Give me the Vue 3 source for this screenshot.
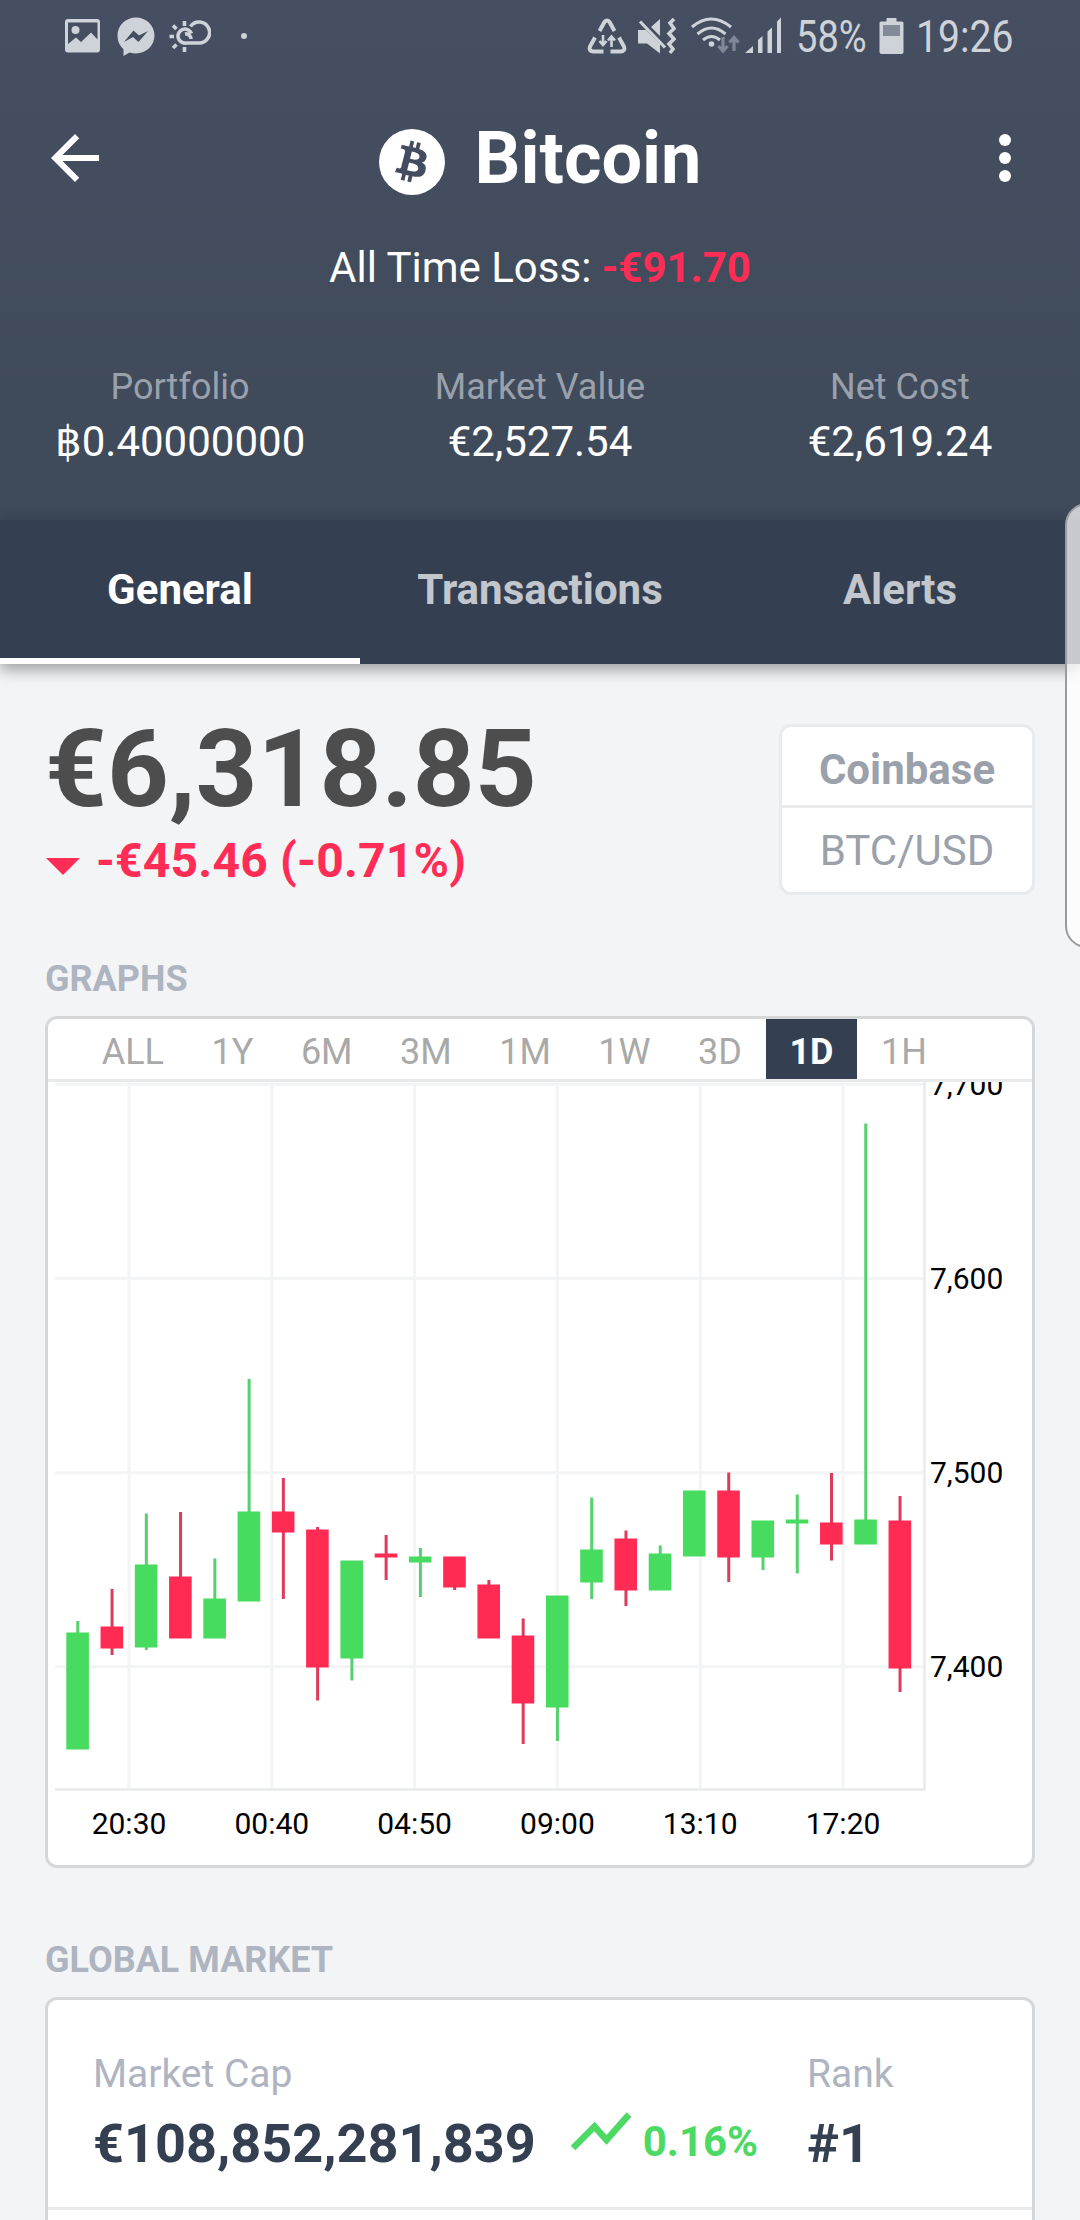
<template>
  <div class="screen">
    <header class="header">
      <div class="status-bar">
        <div class="status-left">
          <svg class="icon-image" width="37" height="40" viewBox="0 0 37 40">
            <path fill-rule="evenodd" d="M4 2h29a3 3 0 0 1 3 3v27.500a3 3 0 0 1-3 3H4a3 3 0 0 1-3-3V5a3 3 0 0 1 3-3zm0 3.500V27l8-6.500 5 4.500 10-9.500 6.500 7V5.500z" />
            <circle cx="11.500" cy="13" r="4" />
          </svg>
          <svg class="icon-messenger" width="38" height="40" viewBox="0 0 38 40">
            <path fill-rule="evenodd" d="M19 .5C8.700.5.500 8.300.500 18.500c0 6 2.500 10.500 6 13.700V39l6-3.600c2 .6 4.200 1 6.500 1 10.300 0 18.500-8 18.500-17.900S29.300.5 19 .5zM7 25l9.500-11.500 5.500 5 9-4.500-9.500 11-5.500-5z" />
          </svg>
          <svg class="icon-weather stroked" width="42" height="40" viewBox="0 0 42 40" stroke-width="3.600">
            <path d="M21.500 9.500a10.500 10.500 0 1 1 8 16.500H17a7 7 0 1 1 5.500-9.500M16 17a5 5 0 0 1 6 5" />
            <path d="M15.500 4v5M15.500 30v5M.5 19.500H5M4 8.500l3.500 3.500M4 31l3.500-3.500" />
          </svg>
          <span class="dot"></span>
        </div>
        <div class="status-right">
          <svg class="stroked" width="40" height="40" viewBox="0 0 40 40" stroke-width="4">
            <path d="M12.500 14l5-9q2.500-3 5 0l5 9M8 20.500l-5 9q-1.500 4.500 3 5h10.500M32 20.500l5 9q1.500 4.500-3 5H23.500" />
            <path stroke-width="2.600" d="M16 18v9M12.500 24l3.500 4 3.500-4M24.500 30v-9M21 23.500l3.500-4 3.500 4" />
          </svg>
          <svg class="icon-mute" width="39" height="40" viewBox="0 0 39 40">
            <path d="M1 13h8l14 14v9.500L10 26.500H1zM14 10l9-8v17z" />
            <path class="line" stroke-width="3.200" d="M3 4.500l25 26" />
            <path class="line" stroke-width="3.600" d="M37 2l-4 4 4 5.500-5 5 5 5.500-5 5 4 5-3 4" />
          </svg>
          <svg class="icon-wifi" width="49" height="40" viewBox="0 0 49 40">
            <path class="line" stroke-width="3" d="M1 10q19-16 39 0M6.500 17q14-12 28 0M12 23q8.500-7 17 0" />
            <circle cx="20.500" cy="27" r="2.800" />
            <g class="line traffic" stroke-width="3.200">
              <path d="M32 20v13M27.500 29l4.500 5 4.500-5M43 34V21M38.500 25.500l4.500-5 4.500 5" />
            </g>
          </svg>
          <svg class="icon-signal" width="38" height="40" viewBox="0 0 38 40">
            <path d="M1 36l8-7v7zM14 23l4.500-4v17H14zM23.500 14.500l4.500-4V36h-4.500zM33 4.500l4-4V36h-4z" />
          </svg>
          <span class="battery-text">58%</span>
          <svg class="icon-battery" width="25" height="40" viewBox="0 0 25 40">
            <path d="M7.500 1h10v3.500H23q1.500 0 1.500 1.500v29q0 2-2 2h-20q-2 0-2-2V6q0-1.500 1.500-1.500h5.500z" />
            <path class="battery-empty" d="M4 8h17v11H4z" />
          </svg>
          <span class="time">19:26</span>
        </div>
      </div>

      <div class="app-bar">
        <svg class="nav-icon" width="72" height="72" viewBox="0 0 24 24">
          <path d="M20 11H7.830l5.590-5.590L12 4l-8 8 8 8 1.410-1.410L7.830 13H20v-2z" />
        </svg>
        <div class="title">
          <svg class="coin" width="66" height="66" viewBox="0 0 24 24">
            <circle cx="12" cy="12" r="12" fill="#fff" />
            <path fill="#434d5f" fill-rule="evenodd" d="M17.288 10.291c.24-1.590-.974-2.450-2.640-3.030l.54-2.153-1.315-.33-.525 2.107c-.345-.087-.705-.167-1.064-.25l.526-2.127-1.320-.33-.54 2.165c-.285-.067-.565-.132-.84-.2l-1.815-.45-.35 1.407s.975.225.955.236c.535.136.63.486.615.766l-1.477 5.920c-.075.166-.24.406-.614.314.015.02-.96-.24-.96-.24l-.66 1.510 1.710.426.93.242-.54 2.190 1.320.327.54-2.170c.36.1.705.19 1.050.273l-.51 2.154 1.320.33.545-2.190c2.240.427 3.930.257 4.640-1.774.57-1.637-.03-2.580-1.217-3.196.854-.193 1.500-.76 1.680-1.930zm-3.010 4.220c-.404 1.640-3.157.75-4.050.53l.72-2.900c.896.23 3.757.67 3.330 2.370zm.41-4.240c-.37 1.490-2.662.735-3.405.55l.654-2.640c.744.18 3.137.524 2.750 2.084z" />
          </svg>
          <h1>Bitcoin</h1>
        </div>
        <svg class="nav-icon" width="72" height="72" viewBox="0 0 24 24">
          <circle cx="12" cy="6" r="2" />
          <circle cx="12" cy="12" r="2" />
          <circle cx="12" cy="18" r="2" />
        </svg>
      </div>

      <p class="all-time">All Time Loss: <b>-€91.70</b></p>

      <div class="stats">
        <div v-for="stat in stats" :key="stat.label" class="stat">
          <span class="stat-label">{{ stat.label }}</span>
          <span class="stat-value">{{ stat.value }}</span>
        </div>
      </div>
    </header>

    <nav class="tabs">
      <a v-for="tab in tabs" :key="tab" class="tab" :class="{ active: tab === activeTab }">{{ tab }}</a>
    </nav>

    <main class="content">
      <section class="summary">
        <div>
          <div class="price">€6,318.85</div>
          <div class="change">
            <span class="arrow-down"></span>
            <span>-€45.46 (-0.71%)</span>
          </div>
        </div>
        <div class="exchange">
          <div class="exchange-name">Coinbase</div>
          <div class="exchange-pair">BTC/USD</div>
        </div>
      </section>

      <h2>GRAPHS</h2>
      <section class="card">
        <div class="ranges">
          <span v-for="range in ranges" :key="range" class="range" :class="{ active: range === activeRange }">{{ range }}</span>
        </div>
        <svg class="chart" width="984" height="783" viewBox="0 0 984 783">
          <g class="grid">
            <line v-for="tick in yTicks" :key="tick.label" x1="7" x2="876" :y1="tick.y" :y2="tick.y" />
            <line v-for="tick in xTicks" :key="tick.label" :x1="tick.x" :x2="tick.x" y1="0" y2="708" />
          </g>
          <path class="axis" d="M7 707.500H876.500V0" />
          <g v-for="(c, i) in candles" :key="i" :class="c[0]">
            <rect class="wick" :x="candleX(i) - 1.500" :y="c[1]" width="3" :height="c[4] - c[1]" />
            <rect class="body" :x="candleX(i) - 11.500" :y="c[2]" width="22.600" :height="c[3] - c[2]" />
          </g>
          <text v-for="tick in yTicks" :key="tick.label" x="882" :y="tick.y + 10.500">{{ tick.label }}</text>
          <text v-for="tick in xTicks" :key="tick.label" :x="tick.x" y="752" text-anchor="middle">{{ tick.label }}</text>
        </svg>
      </section>

      <h2>GLOBAL MARKET</h2>
      <section class="card market">
        <div class="market-row">
          <div class="market-cap">
            <div class="market-label">Market Cap</div>
            <div class="market-value">
              <span>€108,852,281,839</span>
              <svg class="trend" width="62" height="42" viewBox="0 0 62 42">
                <path d="M3 37L24.500 15.500 36.500 29 59 3.500" />
              </svg>
              <span class="percent">0.16%</span>
            </div>
          </div>
          <div>
            <div class="market-label">Rank</div>
            <div class="market-value">#1</div>
          </div>
        </div>
      </section>
    </main>

    <div class="edge-handle"></div>
  </div>
</template>

<script setup>
import { ref } from 'vue'

const stats = [
  { label: 'Portfolio', value: '฿0.40000000' },
  { label: 'Market Value', value: '€2,527.54' },
  { label: 'Net Cost', value: '€2,619.24' }
]

const tabs = ['General', 'Transactions', 'Alerts']
const activeTab = ref('General')

const ranges = ['ALL', '1Y', '6M', '3M', '1M', '1W', '3D', '1D', '1H']
const activeRange = ref('1D')

const yTicks = [
  { label: '7,700', y: 2.5 },
  { label: '7,600', y: 196.5 },
  { label: '7,500', y: 390.8 },
  { label: '7,400', y: 584.8 }
]

const xTicks = [
  { label: '20:30', x: 81 },
  { label: '00:40', x: 223.8 },
  { label: '04:50', x: 366.6 },
  { label: '09:00', x: 509.4 },
  { label: '13:10', x: 652.2 },
  { label: '17:20', x: 795 }
]

// direction, high, body top, body bottom, low
const candles = [
  ['up', 539, 550.5, 667.5, 667],
  ['down', 507, 544.5, 566.5, 573],
  ['up', 431.5, 482.5, 565.5, 568],
  ['down', 430, 494.5, 556.5, 556],
  ['up', 476.5, 516.5, 556.5, 556],
  ['up', 297, 429.5, 519.5, 519],
  ['down', 396, 429.5, 450.5, 517],
  ['down', 445, 447.5, 585.5, 618.5],
  ['up', 479, 478.5, 576.5, 598.5],
  ['down', 453, 471.5, 475.5, 498],
  ['up', 466, 474.5, 480.5, 515],
  ['down', 475, 474.5, 505.5, 508],
  ['down', 498, 502.5, 556.5, 556],
  ['down', 536.5, 553.5, 621.5, 662],
  ['up', 514, 513.5, 625.5, 659],
  ['up', 415.5, 467.5, 500.5, 517],
  ['down', 448.5, 456.5, 508.5, 524],
  ['up', 463.5, 471.5, 508.5, 508],
  ['up', 409, 408.5, 474.5, 474],
  ['down', 390.5, 408.5, 475.5, 500],
  ['up', 439, 438.5, 475.5, 488],
  ['up', 412.5, 437.5, 441.5, 491.5],
  ['down', 391, 440.5, 462.5, 478.5],
  ['up', 41.5, 437.5, 462.5, 462],
  ['down', 414, 438.5, 586.5, 610]
]

const candleX = (i) => 29.8 + i * 34.26
</script>

<style>
body {
  margin: 0;
  background: #f3f4f6;
}
</style>

<style scoped>
.screen {
  position: relative;
  width: 1080px;
  height: 2220px;
  overflow: hidden;
  background: #f3f4f6;
  font-family: Roboto, "Noto Sans", sans-serif;
}

svg {
  display: block;
  flex: none;
}

.header {
  height: 520px;
  background: linear-gradient(#454f61, #3e4959);
  color: #fff;
}

.status-bar {
  display: flex;
  justify-content: space-between;
  height: 72px;
  padding: 17px 67px 0 64px;
  box-sizing: border-box;
  color: #ced2d9;
  fill: currentColor;
}

.status-left,
.status-right {
  display: flex;
  height: 40px;
}

.stroked,
.line {
  fill: none;
  stroke: #ced2d9;
}

.traffic {
  stroke: #7f8896;
}

.icon-messenger {
  margin-left: 16px;
}

.icon-weather {
  margin-left: 14px;
}

.dot {
  width: 6px;
  height: 6px;
  margin: 16px 0 0 30px;
  border-radius: 50%;
  background: currentColor;
}

.icon-mute {
  margin-left: 10px;
}

.icon-wifi {
  margin-left: 15px;
}

.icon-signal {
  margin-left: 4px;
}

.battery-text,
.time {
  font-size: 44px;
  line-height: 41px;
  transform-origin: left center;
}

.battery-text {
  width: 70px;
  margin-left: 14px;
  transform: scaleX(0.865);
}

.icon-battery {
  margin-left: 13px;
}

.battery-empty {
  fill: #838b98;
}

.time {
  width: 97px;
  margin-left: 12px;
  transform: scaleX(0.89);
}

.app-bar {
  display: flex;
  justify-content: space-between;
  align-items: center;
  height: 72px;
  margin-top: 50px;
  padding: 0 39px;
}

.nav-icon {
  fill: #fff;
}

.title {
  display: flex;
  align-items: center;
  gap: 30px;
}

.coin {
  margin-top: 8px;
}

h1 {
  margin: 2px 0 0;
  font-size: 72px;
  line-height: 72px;
  font-weight: 700;
}

.all-time {
  margin: 44px 0 0;
  font-size: 42px;
  line-height: 60px;
  text-align: center;
}

.all-time b {
  color: #ff2d55;
}

.stats {
  display: grid;
  grid-template-columns: repeat(3, 1fr);
  margin-top: 67px;
}

.stat {
  display: flex;
  flex-direction: column;
  align-items: center;
}

.stat-label {
  font-size: 36px;
  line-height: 44px;
  color: #9aa1ac;
}

.stat-value {
  margin-top: 3px;
  font-size: 42px;
  line-height: 60px;
}

.tabs {
  position: relative;
  display: grid;
  grid-template-columns: repeat(3, 1fr);
  height: 144px;
  background: #344051;
  box-shadow: 0 6px 14px rgba(0, 0, 0, 0.35);
}

.tab {
  box-sizing: border-box;
  padding-top: 40px;
  font-size: 42px;
  line-height: 60px;
  font-weight: 700;
  text-align: center;
  color: #c2c6cd;
}

.tab.active {
  color: #fff;
  border-bottom: 6px solid #fff;
}

.content {
  padding: 0 45px;
}

.summary {
  display: flex;
  justify-content: space-between;
  height: 293px;
}

.price {
  margin-top: 55px;
  font-size: 108px;
  line-height: 100px;
  font-weight: 700;
  color: #4d4d4d;
}

.change {
  display: flex;
  align-items: center;
  gap: 16px;
  margin-top: 12px;
  font-size: 48px;
  line-height: 60px;
  font-weight: 700;
  letter-spacing: 0.2px;
  color: #ff2d55;
}

.arrow-down {
  margin: 11px 0 0 1px;
  border: 17px solid transparent;
  border-top-color: currentColor;
  border-bottom: 0;
}

.exchange {
  width: 256px;
  height: 171px;
  margin-top: 60px;
  box-sizing: border-box;
  border: 3px solid #e9eaec;
  border-radius: 12px;
  background: #fff;
  text-align: center;
  font-size: 42px;
  color: #9ba1ab;
}

.exchange-name {
  height: 78px;
  line-height: 85px;
  font-weight: 700;
  border-bottom: 3px solid #e9eaec;
}

.exchange-pair {
  line-height: 85px;
}

h2 {
  margin: 0 0 15px;
  font-size: 36px;
  line-height: 44px;
  font-weight: 700;
  color: #aeb4c0;
}

.card {
  height: 852px;
  margin-bottom: 70px;
  box-sizing: border-box;
  overflow: hidden;
  border: 3px solid #d6d7d9;
  border-radius: 12px;
  background: #fff;
}

.ranges {
  display: flex;
  height: 60px;
  padding-left: 30px;
  border-bottom: 3px solid #e9eaec;
}

.range {
  padding: 0 23.75px;
  font-size: 36px;
  line-height: 66px;
  height: 60px;
  color: #a9a9a9;
}

.range.active {
  font-weight: 700;
  background: #344051;
  color: #fff;
}

.chart {
  font-size: 30px;
}

.grid line {
  stroke: #f3f4f6;
  stroke-width: 3;
}

.axis {
  fill: none;
  stroke: #e9eaec;
  stroke-width: 2.5;
}

.up .body {
  fill: #47db5f;
}

.up .wick {
  fill: #55d06e;
}

.down .body {
  fill: #ff2b52;
}

.down .wick {
  fill: #dc3b5c;
}

.market-row {
  display: flex;
  height: 210px;
  padding: 52px 0 0 45px;
  box-sizing: border-box;
  border-bottom: 3px solid #e9eaec;
}

.market-cap {
  width: 714px;
}

.market-label {
  font-size: 39px;
  line-height: 44px;
  color: #aeb4c0;
}

.market-value {
  display: flex;
  margin-top: 18px;
  font-size: 54px;
  line-height: 60px;
  font-weight: 700;
  color: #344051;
}

.trend {
  margin: -3px 0 0 34px;
  fill: none;
  stroke: #4cd964;
  stroke-width: 6.5;
}

.percent {
  margin-left: 11px;
  font-size: 42px;
  line-height: 56px;
  color: #4cd964;
}

/* translucent drawer grip over the right edge */
.edge-handle {
  position: absolute;
  top: 503px;
  right: -30px;
  width: 45px;
  height: 445px;
  box-sizing: border-box;
  border: 2px solid #999b9e;
  border-radius: 22px;
  background: rgba(255, 255, 255, 0.72);
}
</style>
